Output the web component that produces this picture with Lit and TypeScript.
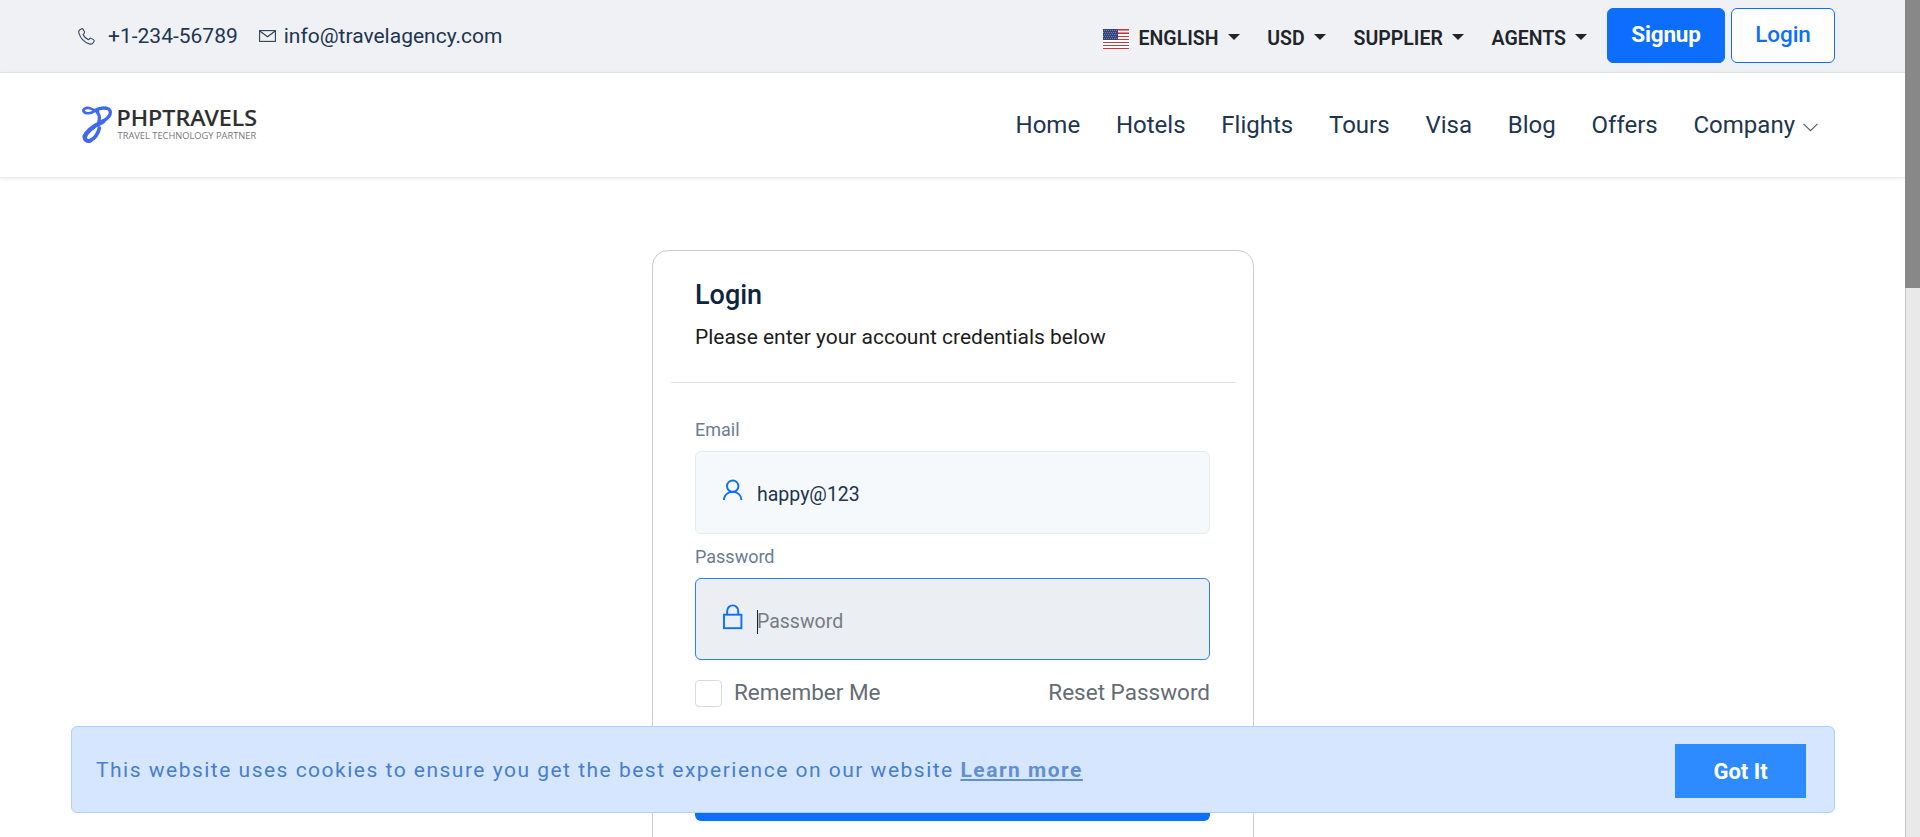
import { LitElement, html, css, svg } from "lit";
import { customElement, state } from "lit/decorators.js";

const MENUS = ["ENGLISH", "USD", "SUPPLIER", "AGENTS"];
const NAV = ["Home", "Hotels", "Flights", "Tours", "Visa", "Blog", "Offers", "Company"];

const phone = html`<svg class="phone" width="17" height="17" viewBox="0 0 17 17" fill="none" stroke="#33475f" stroke-width="1.1" stroke-linejoin="round">
  <path d="M3.6.8 1.9 1.7C.8 2.4.5 3.6.9 5.1c1.5 5 5.3 9 10.4 10.8 1.5.5 2.7.2 3.5-.8l1.2-1.6c.4-.6.3-1.2-.3-1.6l-2.5-1.5c-.6-.4-1.1-.3-1.6.2l-1 1.2C8.2 10.9 6 8.7 5 6.3l1.100-1c.5-.5.6-1 .3-1.600L5.100 1.200C4.700.6 4.200.5 3.600.8z"/></svg>`;
const mail = html`<svg class="mail" width="17" height="12" viewBox="0 0 17 12" fill="none" stroke="#2b4058" stroke-width="1.1">
  <rect x=".6" y=".6" width="15.8" height="10.8"/><path d="M.8 1 8.500 6.700 16.200 1"/></svg>`;
const user = html`<svg class="glyph" width="20" height="26" viewBox="0 0 20 26" fill="none" stroke="#0d6efd" stroke-width="1.9">
  <circle cx="9.700" cy="7.200" r="5.700"/><path d="M.9 21c0-4.800 3.900-8.200 8.800-8.200s8.800 3.400 8.800 8.200"/></svg>`;
const lock = html`<svg class="glyph" width="20" height="26" viewBox="0 0 20 26" fill="none" stroke="#0d6efd" stroke-width="1.9">
  <rect x="1" y="10.700" width="17.400" height="13.500"/><path d="M4.200 10.500V6.900a5.500 5.500 0 0 1 11 0v3.600"/></svg>`;
const flag = html`<svg class="flag" width="26" height="20" viewBox="0 0 26 20" shape-rendering="crispEdges">
  <rect width="26" height="20" fill="#fff"/>
  ${[0, 4, 7, 10, 13, 16, 19].map(y => svg`<rect y=${y} width="26" height="1" fill="#c4373f"/>`)}
  <rect y="1" width="26" height="1" fill="#dd8a90"/><rect y="3" width="26" height="1" fill="#dd8a90"/>
  <rect width="15" height="11" fill="#33437c"/>
  ${[1, 3, 5, 7, 9].map(y => [0, 2, 4, 6, 8, 10, 12].map(x => svg`<rect x=${x + (y % 4 === 1 ? 1 : 0)} y=${y} width="1" height="1" fill="#7683ad"/>`))}
</svg>`;
const logo = html`<svg class="logo" width="182" height="50" viewBox="-1 -6 182 50">
  <g fill="none" stroke="#4169f0" stroke-linecap="round" stroke-linejoin="round">
    <path stroke-width="2.700" d="M13.500 4.500C9 8 3 8 1.700 5.400 .6 3 3.800 1.300 7 2c4 .9 5 3.200 9 3.200"/>
    <path stroke-width="3.400" d="M13 4.500C17 2 21 1.600 24.500 2.200 28 2.900 29 5.500 28 8.500 26.500 13 21 15.500 16 18"/>
    <path stroke-width="4.600" d="M21 15.500C13 19.500 5 24 2.800 30.500"/>
    <path stroke-width="4" d="M2.800 30C2 33.500 5 36 8.500 34.700"/>
    <path stroke-width="3.600" d="M8 34.700C13 32.500 16 28 17.400 22"/>
    <path stroke-width="3.200" d="M15.300 6.500C17.500 8.500 17.800 12 16.800 16"/>
  </g>
  <path d="M6.500 33c.5-4.500 4-8 8.500-11.500" fill="none" stroke="#fff" stroke-width="1"/>
  <text class="brand" x="34.500" y="20.300" textLength="140.500" lengthAdjust="spacingAndGlyphs">PHPTRAVELS</text>
  <text class="tag" x="35.600" y="33.400" textLength="138.600" lengthAdjust="spacingAndGlyphs">TRAVEL TECHNOLOGY PARTNER</text>
</svg>`;

@customElement("app-root")
export class AppRoot extends LitElement {
  static styles = css`
    :host { display: grid; grid-template-columns: 1fr 15px; height: 837px; overflow: hidden; position: relative; background: #fff; font-family: Roboto, "Liberation Sans", sans-serif; color: #0d233e; }
    * { box-sizing: border-box; }
    svg { display: block; flex: none; }
    .page { overflow: hidden; }
    .top { height: 73px; background: #f0f1f5; border-bottom: 1px solid #e2e4e6; display: flex; align-items: center; padding: 0 70px 0 78px; }
    .contact { display: flex; align-items: center; font-size: 21px; line-height: 24px; flex: 1; white-space: pre; color: #20354f; }
    .phone { margin-right: 13px; }
    .mail { margin: 0 8px 0 21px; }
    .menus { display: flex; align-items: center; font-size: 19.5px; line-height: 24px; font-weight: 600; color: #212529; padding-top: 5px; }
    .flag { margin-right: 10px; margin-top: 1px; }
    .menu { display: flex; align-items: center; margin-right: 27.8px; }
    .menu:last-child { margin-right: 20px; }
    .tri { width: 0; height: 0; border: 6px solid transparent; border-top-color: #212529; border-bottom: 0; margin: -4px 0 0 9px; }
    .btn { height: 55px; border: 1px solid #0d6efd; border-radius: 6px; font-size: 22.500px; line-height: 50px; text-align: center; margin-bottom: 2px; }
    .signup { width: 118px; background: #0d6efd; color: #fff; font-weight: 700; letter-spacing: -.2px; }
    .login { width: 104px; margin-left: 6px; background: #fff; color: #0d6efd; font-weight: 500; letter-spacing: -.1px; }
    .head { height: 105px; display: flex; align-items: center; justify-content: space-between; padding: 0 87px 1px 81px; border-bottom: 1px solid #e9e9ea; box-shadow: 0 1px 4px rgba(0,0,0,.08); }
    .logo { margin-top: 1px; }
    .brand { font: 500 21.500px "Noto Sans", sans-serif; fill: #2d2e2f; stroke: #2d2e2f; stroke-width: .2px; }
    .tag { font: 400 9.800px "Open Sans", sans-serif; fill: #777; }
    nav { display: flex; gap: 35.800px; font-size: 24px; line-height: 30px; color: #20354f; }
    .link { display: flex; align-items: center; }
    .chev { margin: 5px 0 0 8px; }
    .card { width: 602px; height: 700px; margin: 72px auto 0; position: relative; left: .500px; border: 1px solid #ccc; border-radius: 16px; padding: 28px 18px; }
    .in { padding: 0 25px 0 24px; }
    h3 { font-size: 27px; line-height: 32px; font-weight: 500; margin: 0 0 12px; }
    p { margin: 0; font-size: 21px; line-height: 28px; color: #1c1c1c; letter-spacing: -.015px; }
    hr { border: 0; border-top: 1px solid #dddfe8; margin: 31px 0 36px; }
    label { display: block; font-size: 18px; line-height: 22px; color: #6b7c93; }
    .field { height: 83px; margin: 10px 0 12px; border: 1px solid #e6ebf0; border-radius: 6px; background: #f5f9fc; display: flex; padding: 0 27px; }
    .field.focus { height: 82px; background: #ebeff4; border-color: #2a80f8; margin-bottom: 20px; }
    .glyph { margin-top: 27px; }
    .focus .glyph { margin-top: 25px; }
    .value { font-size: 19.500px; line-height: 24px; padding-top: 31px; margin-left: 14px; white-space: pre; color: #20354f; }
    .focus .value { color: #757c83; display: flex; }
    .caret { width: 1px; height: 24px; background: #0d233e; margin-right: -1px; }
    .row { display: flex; align-items: center; font-size: 22.500px; line-height: 26px; color: #656c74; height: 27px; }
    .box { width: 27px; height: 27px; border: 1px solid #d8dadd; border-radius: 4px; margin-right: 12px; }
    .row span { flex: 1; padding-bottom: 4px; } .row a { padding-bottom: 4px; }
    .submit { height: 60px; margin-top: 54px; background: #0d6efd; border-radius: 6px; }
    .cookie { position: absolute; left: 71px; top: 726px; width: 1764px; height: 87px; background: #d7e6ff; border: 1px solid #b0d0fb; border-radius: 6px; display: flex; align-items: center; justify-content: space-between; padding: 0 28px 0 24px; font-size: 21px; line-height: 28px; letter-spacing: 1.495px; color: #457fcc; }
    .cookie b { color: #6190d0; text-decoration: underline; text-decoration-thickness: 2px; text-underline-offset: 2px; }
    .got { width: 131px; height: 54px; margin-top: 3px; background: #2e8bff; color: #fff; font-weight: 700; font-size: 22px; line-height: 55px; text-align: center; letter-spacing: 0; }
    .bar { background: #e9e9e9; border-left: 1px solid #c5c5c5; }
    .thumb { height: 288px; margin-left: -1px; background: #888; }
  `;
  @state() email = "happy@123";
  render() {
    return html`
      <div class="page">
        <div class="top">
          <div class="contact">${phone}<span>+1-234-56789</span>${mail}<span>info@travelagency.com</span></div>
          <div class="menus">${flag}${MENUS.map(m => html`<div class="menu">${m}<i class="tri"></i></div>`)}</div>
          <div class="btn signup">Signup</div><div class="btn login">Login</div>
        </div>
        <div class="head">
          ${logo}
          <nav>${NAV.map(n => html`<div class="link">${n}${n === "Company" ? html`<svg class="chev" width="15" height="9" viewBox="0 0 15 9" fill="none" stroke="#4a5b70" stroke-width="1.100"><path d="M.5.8 7.500 7.700 14.500.8"/></svg>` : ""}</div>`)}</nav>
        </div>
        <div class="card">
          <div class="in"><h3>Login</h3><p>Please enter your account credentials below</p></div>
          <hr />
          <div class="in">
            <label>Email</label>
            <div class="field">${user}<div class="value">${this.email}</div></div>
            <label>Password</label>
            <div class="field focus">${lock}<div class="value"><i class="caret"></i>Password</div></div>
            <div class="row"><i class="box"></i><span>Remember Me</span><a>Reset Password</a></div>
            <div class="submit"></div>
          </div>
        </div>
      </div>
      <div class="bar"><div class="thumb"></div></div>
      <div class="cookie"><div>This website uses cookies to ensure you get the best experience on our website <b>Learn more</b></div><div class="got">Got It</div></div>`;
  }
}
